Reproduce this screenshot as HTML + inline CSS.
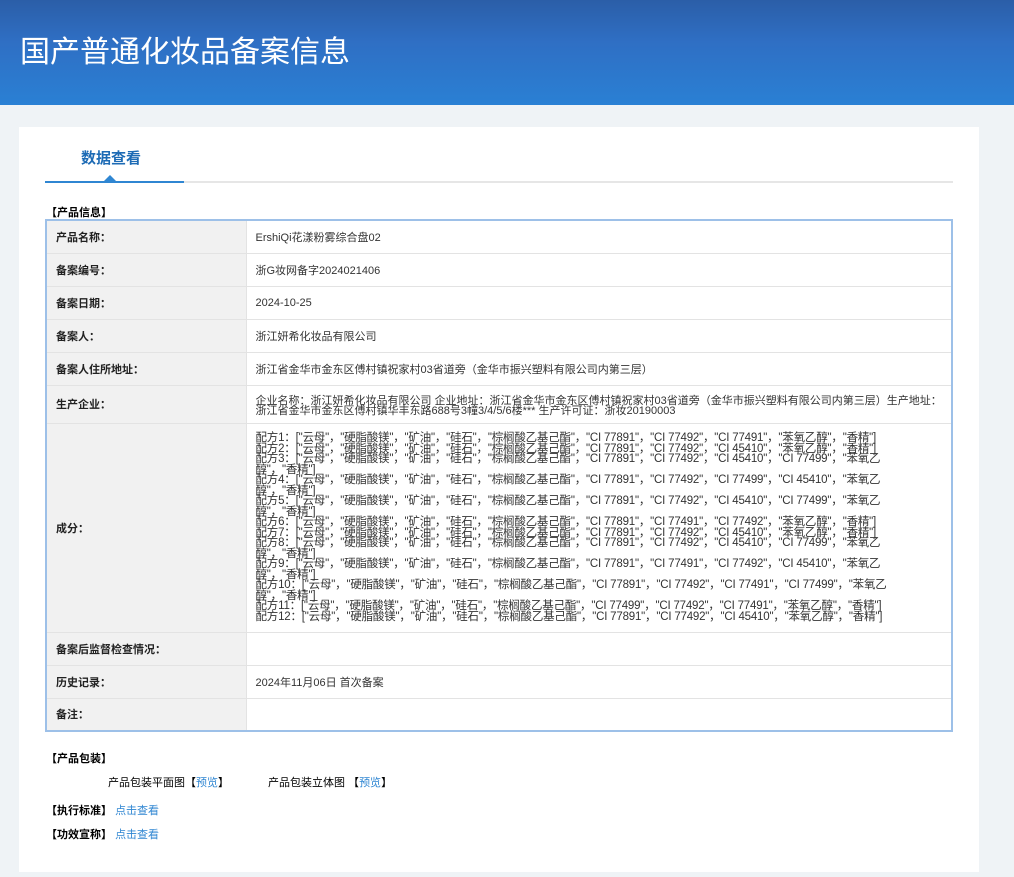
<!DOCTYPE html>
<html><head><meta charset="utf-8"><style>
*{margin:0;padding:0;box-sizing:border-box}
body{width:1014px;height:877px;background:#eff3f6;font-family:"Liberation Sans","Noto Sans CJK SC",sans-serif;font-size:12px;color:#333;position:relative;overflow:hidden}
.hdr{position:absolute;left:0;top:0;width:1014px;height:105px;background:linear-gradient(180deg,#2b5ea8 0%,#2f6fc4 40%,#2a80d4 100%)}
.hdr h1{position:absolute;left:20px;top:27px;font-size:30px;font-weight:normal;color:#fff;letter-spacing:0px;font-family:"Noto Sans CJK SC",sans-serif}
.card{position:absolute;left:19px;top:127px;width:960px;height:745px;background:#fff}
.tab{position:absolute;left:81px;top:147px;font-size:15px;font-weight:bold;color:#1d6bb5}
.line{position:absolute;left:45px;top:181px;width:908px;height:2px;background:#e6e6e6}
.line b{position:absolute;left:0;top:0;width:139px;height:2px;background:#2f86d2}
.tri{position:absolute;left:104px;top:175px;width:0;height:0;border-left:6px solid transparent;border-right:6px solid transparent;border-bottom:6px solid #2f86d2}
.sec{position:absolute;font-weight:bold;color:#000;font-size:12px}
table{position:absolute;left:45px;top:219px;width:908px;border-collapse:collapse;border:2px solid #9dc0e8}
td{border:1px solid #e3e3e3;vertical-align:middle;font-size:11px}
td.l{width:200px;background:#f1f1f1;font-weight:bold;color:#222;padding-left:9px}
td.v{padding-left:9px;color:#333}
.ing{line-height:10.5px;font-size:11.5px;padding-top:5px;padding-bottom:5px;letter-spacing:-0.2px}
a{color:#2f86d2;text-decoration:none}
.t{position:absolute;font-size:11px;color:#000}
</style></head><body>
<div class="hdr"><h1>国产普通化妆品备案信息</h1></div>
<div class="card"></div>
<div class="tab">数据查看</div>
<div class="line"><b></b></div>
<div class="tri"></div>
<div class="sec" style="left:46px;top:204px;font-size:11px">【产品信息】</div>
<table>
<tr style="height:33px"><td class="l">产品名称：</td><td class="v">ErshiQi花漾粉雾综合盘02</td></tr>
<tr style="height:33px"><td class="l">备案编号：</td><td class="v">浙G妆网备字2024021406</td></tr>
<tr style="height:33px"><td class="l">备案日期：</td><td class="v">2024-10-25</td></tr>
<tr style="height:33px"><td class="l">备案人：</td><td class="v">浙江妍希化妆品有限公司</td></tr>
<tr style="height:33px"><td class="l">备案人住所地址：</td><td class="v">浙江省金华市金东区傅村镇祝家村03省道旁（金华市振兴塑料有限公司内第三层）</td></tr>
<tr style="height:38px"><td class="l">生产企业：</td><td class="v" style="line-height:10px;padding-top:3px">企业名称：浙江妍希化妆品有限公司 企业地址：浙江省金华市金东区傅村镇祝家村03省道旁（金华市振兴塑料有限公司内第三层）生产地址：浙江省金华市金东区傅村镇华丰东路688号3幢3/4/5/6楼*** 生产许可证：浙妆20190003</td></tr>
<tr style="height:209px"><td class="l">成分：</td><td class="v ing">配方1：["云母"，"硬脂酸镁"，"矿油"，"硅石"，"棕榈酸乙基己酯"，"CI 77891"，"CI 77492"，"CI 77491"，"苯氧乙醇"，"香精"]<br>配方2：["云母"，"硬脂酸镁"，"矿油"，"硅石"，"棕榈酸乙基己酯"，"CI 77891"，"CI 77492"，"CI 45410"，"苯氧乙醇"，"香精"]<br>配方3：["云母"，"硬脂酸镁"，"矿油"，"硅石"，"棕榈酸乙基己酯"，"CI 77891"，"CI 77492"，"CI 45410"，"CI 77499"，"苯氧乙<br>醇"，"香精"]<br>配方4：["云母"，"硬脂酸镁"，"矿油"，"硅石"，"棕榈酸乙基己酯"，"CI 77891"，"CI 77492"，"CI 77499"，"CI 45410"，"苯氧乙<br>醇"，"香精"]<br>配方5：["云母"，"硬脂酸镁"，"矿油"，"硅石"，"棕榈酸乙基己酯"，"CI 77891"，"CI 77492"，"CI 45410"，"CI 77499"，"苯氧乙<br>醇"，"香精"]<br>配方6：["云母"，"硬脂酸镁"，"矿油"，"硅石"，"棕榈酸乙基己酯"，"CI 77891"，"CI 77491"，"CI 77492"，"苯氧乙醇"，"香精"]<br>配方7：["云母"，"硬脂酸镁"，"矿油"，"硅石"，"棕榈酸乙基己酯"，"CI 77891"，"CI 77492"，"CI 45410"，"苯氧乙醇"，"香精"]<br>配方8：["云母"，"硬脂酸镁"，"矿油"，"硅石"，"棕榈酸乙基己酯"，"CI 77891"，"CI 77492"，"CI 45410"，"CI 77499"，"苯氧乙<br>醇"，"香精"]<br>配方9：["云母"，"硬脂酸镁"，"矿油"，"硅石"，"棕榈酸乙基己酯"，"CI 77891"，"CI 77491"，"CI 77492"，"CI 45410"，"苯氧乙<br>醇"，"香精"]<br>配方10：["云母"，"硬脂酸镁"，"矿油"，"硅石"，"棕榈酸乙基己酯"，"CI 77891"，"CI 77492"，"CI 77491"，"CI 77499"，"苯氧乙<br>醇"，"香精"]<br>配方11：["云母"，"硬脂酸镁"，"矿油"，"硅石"，"棕榈酸乙基己酯"，"CI 77499"，"CI 77492"，"CI 77491"，"苯氧乙醇"，"香精"]<br>配方12：["云母"，"硬脂酸镁"，"矿油"，"硅石"，"棕榈酸乙基己酯"，"CI 77891"，"CI 77492"，"CI 45410"，"苯氧乙醇"，"香精"]</td></tr>
<tr style="height:33px"><td class="l">备案后监督检查情况：</td><td class="v"></td></tr>
<tr style="height:33px"><td class="l">历史记录：</td><td class="v">2024年11月06日 首次备案</td></tr>
<tr style="height:33px"><td class="l">备注：</td><td class="v"></td></tr>
</table>
<div class="sec" style="left:46px;top:750px;font-size:11px">【产品包装】</div>
<div class="t" style="left:108px;top:774px">产品包装平面图【<a>预览</a>】</div>
<div class="t" style="left:268px;top:774px">产品包装立体图 【<a>预览</a>】</div>
<div class="sec" style="left:46px;top:802px;font-size:11px">【执行标准】 <a style="font-weight:normal">点击查看</a></div>
<div class="sec" style="left:46px;top:826px;font-size:11px">【功效宣称】 <a style="font-weight:normal">点击查看</a></div>
</body></html>
